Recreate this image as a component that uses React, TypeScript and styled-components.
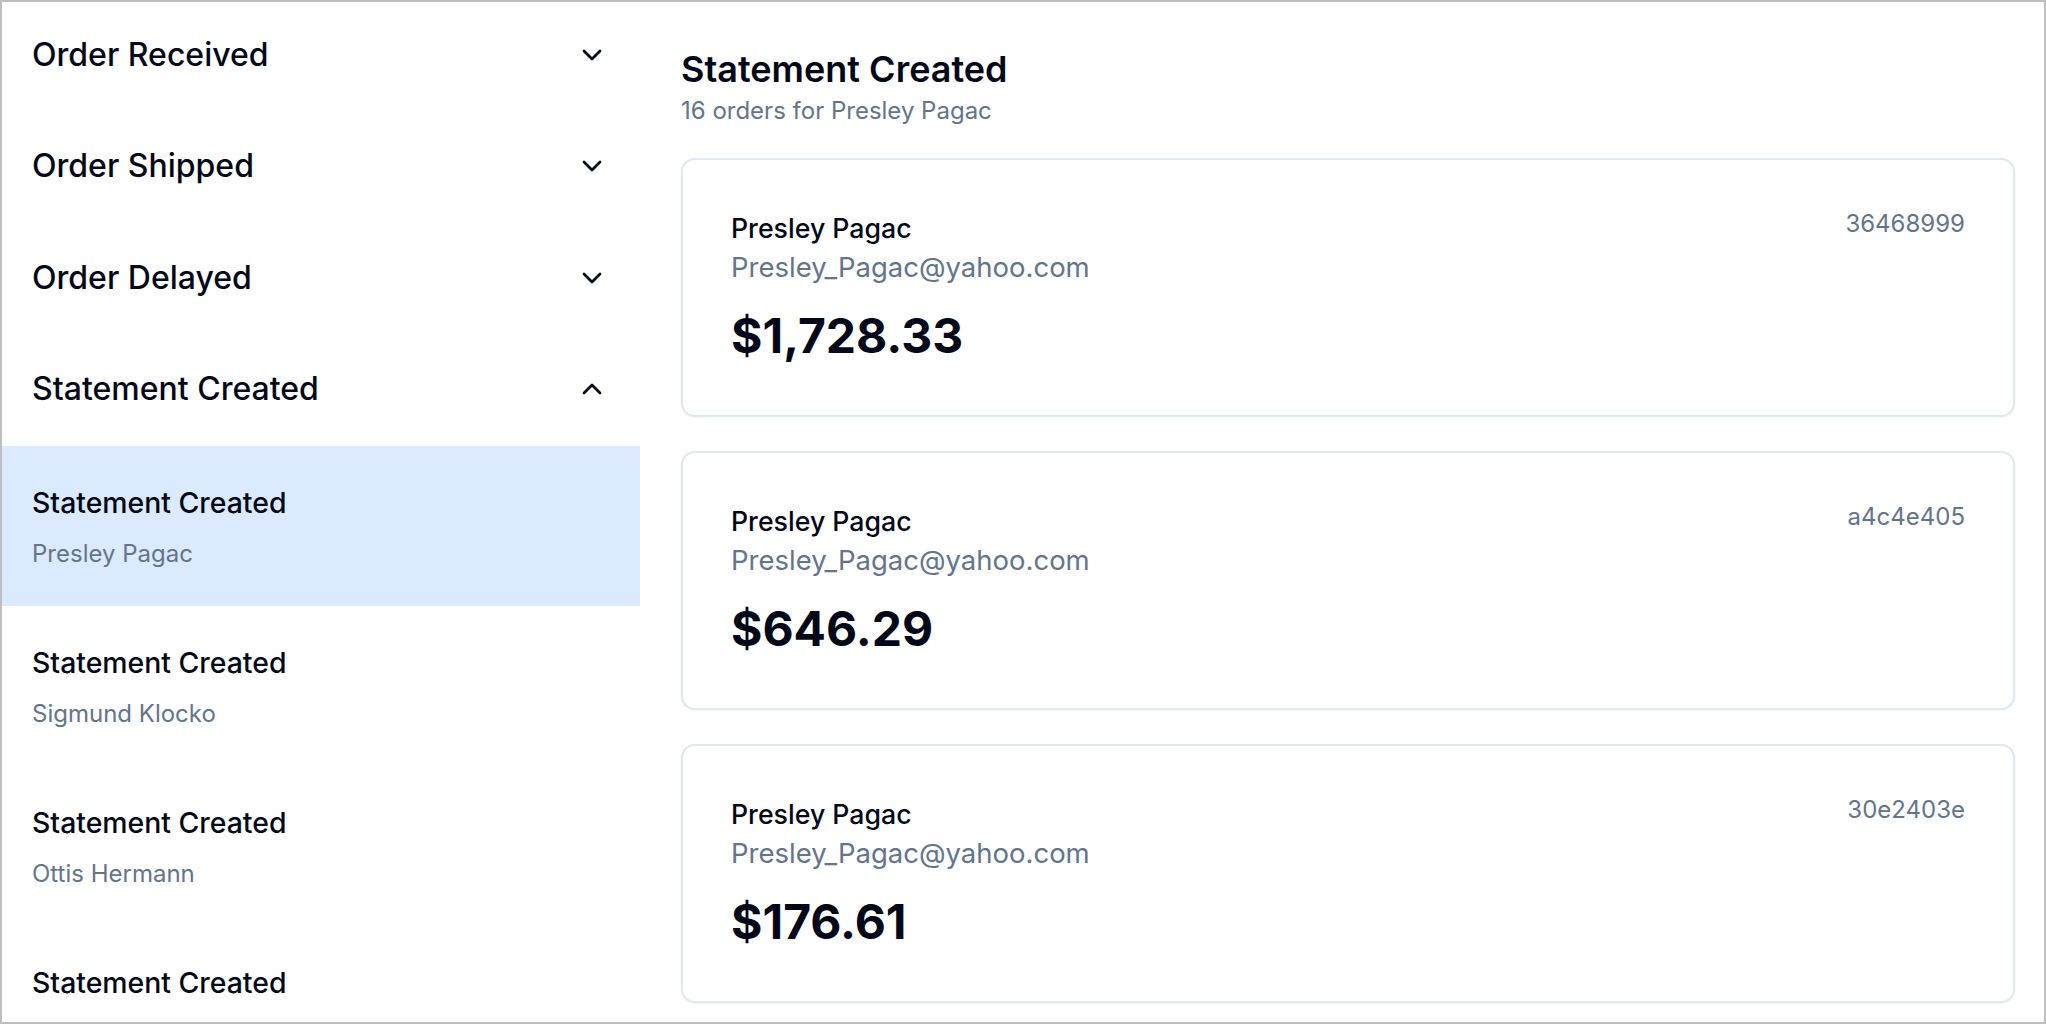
import React from 'react'
import styled, { createGlobalStyle } from 'styled-components'
import { ChevronDown, ChevronUp } from 'lucide-react'

const GlobalStyle = createGlobalStyle`
  html, body {
    margin: 0;
    padding: 0;
    background: #ffffff;
  }
  body {
    font-family: Inter, "Noto Sans", "Liberation Sans", sans-serif;
    color: #020817;
    -webkit-font-smoothing: antialiased;
  }
  * {
    box-sizing: border-box;
  }
`

const Frame = styled.div`
  position: relative;
  width: 100vw;
  height: 100vh;
  display: flex;
  overflow: hidden;
  background: #fff;

  &::after {
    content: '';
    position: absolute;
    inset: 0;
    border: 2px solid #bfbfbf;
    pointer-events: none;
  }
`

const Sidebar = styled.aside`
  flex: 0 0 640px;
  display: flex;
  flex-direction: column;
  overflow: hidden;
`

const GroupHeader = styled.div`
  flex: 0 0 111.5px;
  display: flex;
  align-items: center;
  justify-content: space-between;
  padding: 0 32px 2px 32px;
  font-size: 32px;
  font-weight: 500;
  line-height: 44px;
  color: #020817;

  svg {
    flex: 0 0 auto;
  }
`

const EventItem = styled.div<{ $active?: boolean }>`
  flex: 0 0 160px;
  display: flex;
  flex-direction: column;
  padding: 38.5px 32px 0 32px;
  background: ${(p) => (p.$active ? '#dbeafe' : 'transparent')};
`

const EventTitle = styled.div`
  font-size: 28.4px;
  font-weight: 500;
  line-height: 36px;
  color: #020817;
`

const EventSub = styled.div`
  margin-top: 17.5px;
  font-size: 24px;
  line-height: 32px;
  color: #64748b;
`

const Main = styled.main`
  flex: 1 1 auto;
  display: flex;
  flex-direction: column;
  padding: 46px 31px 0 41px;
  overflow: hidden;
`

const Heading = styled.h1`
  margin: 0;
  font-size: 36px;
  font-weight: 600;
  line-height: 46px;
  color: #020817;
`

const SubHeading = styled.p`
  margin: 2.5px 0 0 0;
  font-size: 24px;
  line-height: 32px;
  color: #64748b;
`

const CardList = styled.div`
  display: flex;
  flex-direction: column;
  gap: 34px;
  margin-top: 31px;
`

const Card = styled.div`
  flex: 0 0 259px;
  border: 2px solid #e2e8f0;
  border-radius: 14px;
  padding: 48.5px 48px 50px 48px;
  background: #fff;
  box-shadow: 0 1px 3px rgba(15, 23, 42, 0.05);
`

const CardTop = styled.div`
  display: flex;
  justify-content: space-between;
  align-items: flex-start;
`

const CustomerName = styled.div`
  font-size: 26.7px;
  font-weight: 500;
  line-height: 40px;
  color: #020817;
`

const OrderId = styled.div`
  font-size: 24px;
  line-height: 32px;
  color: #64748b;
`

const Email = styled.div`
  margin-top: -1px;
  font-size: 27.5px;
  line-height: 40px;
  color: #64748b;
`

const Amount = styled.div`
  margin-top: 21px;
  font-size: 48px;
  font-weight: 700;
  line-height: 56px;
  color: #020817;
`

const groups = [
  { label: 'Order Received', open: false },
  { label: 'Order Shipped', open: false },
  { label: 'Order Delayed', open: false },
  { label: 'Statement Created', open: true },
]

const events = [
  { title: 'Statement Created', name: 'Presley Pagac', active: true },
  { title: 'Statement Created', name: 'Sigmund Klocko' },
  { title: 'Statement Created', name: 'Ottis Hermann' },
  { title: 'Statement Created', name: 'Marlee Kuhic' },
]

const orders = [
  { id: '36468999', amount: '$1,728.33' },
  { id: 'a4c4e405', amount: '$646.29' },
  { id: '30e2403e', amount: '$176.61' },
  { id: '7f1b92c0', amount: '$912.04' },
]

export default function App() {
  return (
    <>
      <GlobalStyle />
      <Frame>
        <Sidebar>
          {groups.map((g) => (
            <React.Fragment key={g.label}>
              <GroupHeader>
                <span>{g.label}</span>
                {g.open ? (
                  <ChevronUp size={32} strokeWidth={2} />
                ) : (
                  <ChevronDown size={32} strokeWidth={2} />
                )}
              </GroupHeader>
              {g.open &&
                events.map((e) => (
                  <EventItem key={e.name} $active={e.active}>
                    <EventTitle>{e.title}</EventTitle>
                    <EventSub>{e.name}</EventSub>
                  </EventItem>
                ))}
            </React.Fragment>
          ))}
        </Sidebar>
        <Main>
          <Heading>Statement Created</Heading>
          <SubHeading>16 orders for Presley Pagac</SubHeading>
          <CardList>
            {orders.map((o) => (
              <Card key={o.id}>
                <CardTop>
                  <CustomerName>Presley Pagac</CustomerName>
                  <OrderId>{o.id}</OrderId>
                </CardTop>
                <Email>Presley_Pagac@yahoo.com</Email>
                <Amount>{o.amount}</Amount>
              </Card>
            ))}
          </CardList>
        </Main>
      </Frame>
    </>
  )
}
